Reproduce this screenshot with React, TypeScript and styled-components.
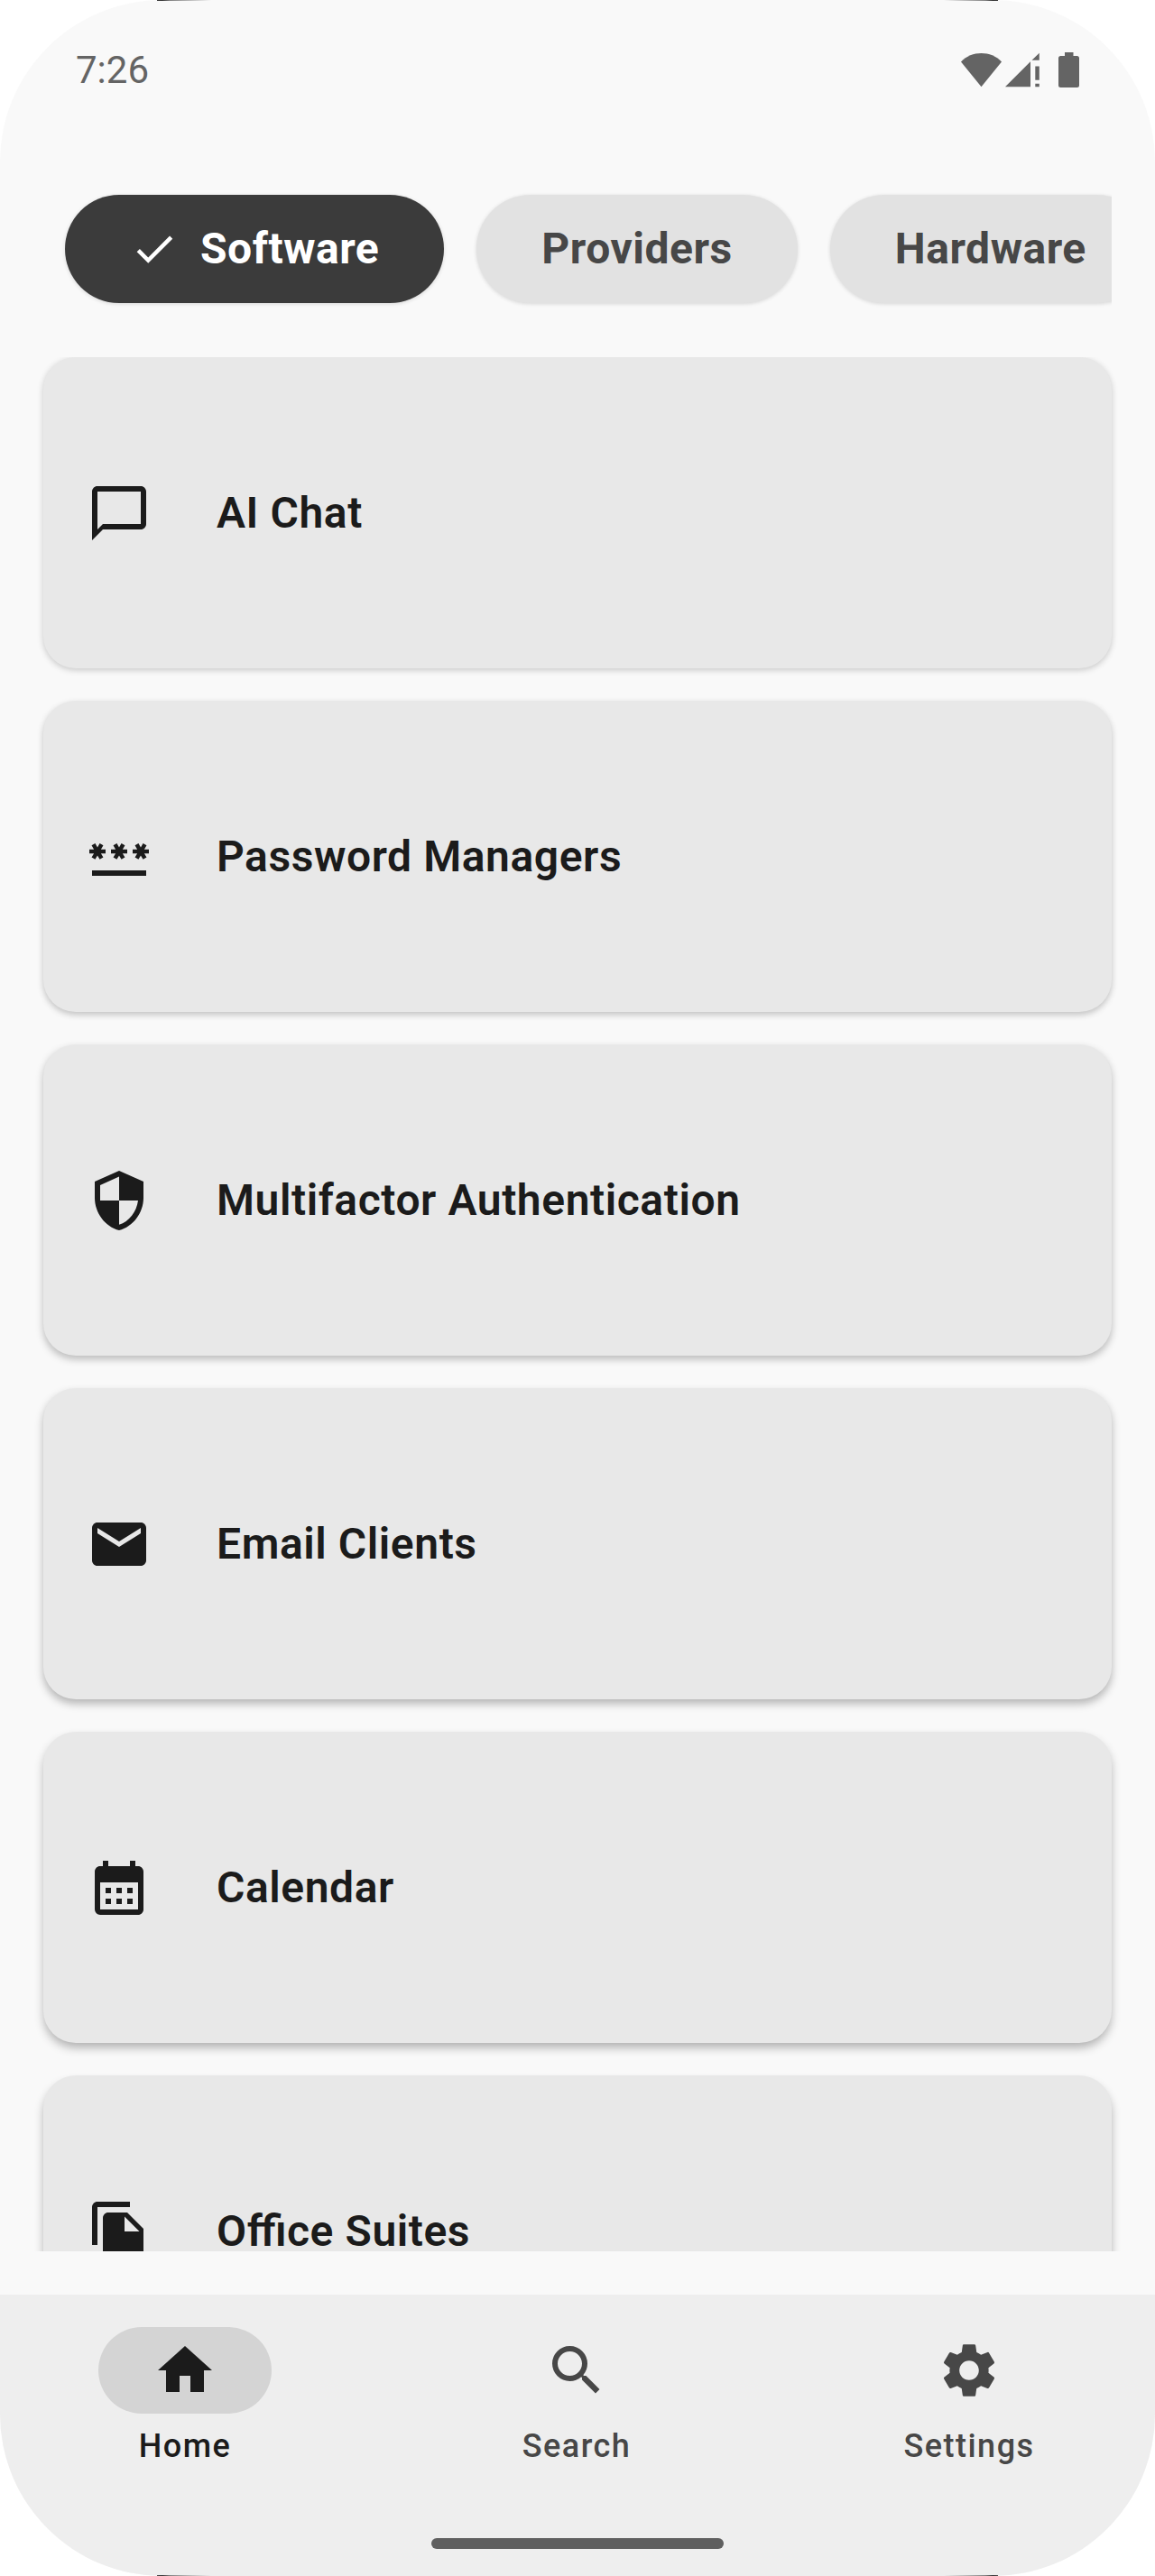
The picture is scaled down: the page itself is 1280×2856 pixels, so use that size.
import React from "react";
import styled, { createGlobalStyle } from "styled-components";
import type { IconType } from "react-icons";
import {
  MdCalendarMonth,
  MdChatBubbleOutline,
  MdCheck,
  MdEmail,
  MdFileCopy,
  MdHome,
  MdPassword,
  MdSearch,
  MdSecurity,
  MdSettings,
} from "react-icons/md";

const GlobalStyle = createGlobalStyle`
  *, *::before, *::after { box-sizing: border-box; }
  body {
    margin: 0;
    background: #ffffff;
    font-family: Roboto, "Liberation Sans", sans-serif;
  }
  svg { display: block; }
  button { font: inherit; border: 0; padding: 0; background: none; }
`;

const edgeLines = (side: "top" | "bottom") => `
  linear-gradient(90deg, #000 0, #808080 14px, #b8b8b8 36px, transparent 60px) 174px ${side} / 60px 1px no-repeat,
  linear-gradient(270deg, #000 0, #808080 14px, #b8b8b8 36px, transparent 60px) 1046px ${side} / 60px 1px no-repeat`;

const Screen = styled.div`
  display: flex;
  flex-direction: column;
  width: 1280px;
  height: 2856px;
  overflow: hidden;
  border-radius: 180px;
  background: ${edgeLines("top")}, #f9f9f9;
`;

const StatusBar = styled.header`
  display: flex;
  align-items: center;
  justify-content: space-between;
  height: 156px;
  padding: 0 83px 0 84px;
  color: #646464;
`;

const Clock = styled.span`
  font-size: 42px;
  line-height: 48px;
`;

const StatusIcons = styled.div`
  display: flex;
  align-items: center;
`;

const ChipRow = styled.nav`
  display: flex;
  gap: 36px;
  height: 240px;
  margin: 0 48px;
  padding: 60px 24px;
  overflow: hidden;
`;

const Chip = styled.button<{ $selected?: boolean }>`
  display: flex;
  flex: none;
  align-items: center;
  gap: 24px;
  height: 120px;
  padding: 0 72px;
  border-radius: 60px;
  background: ${(p) => (p.$selected ? "#3b3b3b" : "#e2e2e2")};
  color: ${(p) => (p.$selected ? "#ffffff" : "#474747")};
  font-size: 48px;
  font-weight: 700;
  line-height: 72px;
  letter-spacing: 0.53px;
  white-space: nowrap;
  box-shadow: 0 1px 4px rgba(0, 0, 0, 0.14);
`;

const CardList = styled.main`
  display: flex;
  flex-direction: column;
  gap: 36px;
  height: 2100px;
  padding: 0 48px;
  overflow: hidden;
`;

const Card = styled.section<{ $depth: number }>`
  display: flex;
  flex: none;
  align-items: center;
  gap: 72px;
  height: 345px;
  padding: 0 48px;
  border-radius: 36px;
  background: #e8e8e8;
  color: #1b1b1b;
  box-shadow: 0 ${(p) => 2 + p.$depth}px ${(p) => 7 + p.$depth * 0.8}px
    ${(p) => p.$depth * -0.3}px rgba(0, 0, 0, ${(p) => 0.2 + p.$depth * 0.025});
`;

const CardTitle = styled.h2`
  margin: 0;
  font-size: 48px;
  font-weight: 600;
  line-height: 72px;
  letter-spacing: 0.57px;
  font-feature-settings: "liga" 1;
  white-space: nowrap;
`;

const BottomBar = styled.footer`
  display: flex;
  flex-direction: column;
  align-items: center;
  justify-content: space-between;
  height: 312px;
  margin-top: 48px;
  padding: 36px 0 30px;
  background: ${edgeLines("bottom")}, #eeeeee;
`;

const Tabs = styled.nav`
  display: grid;
  grid-template-columns: 410px 410px 412px;
  gap: 24px;
`;

const Tab = styled.button<{ $active?: boolean }>`
  display: flex;
  flex-direction: column;
  align-items: center;
  gap: 12px;
  color: ${(p) => (p.$active ? "#1b1b1b" : "#474747")};
`;

const Indicator = styled.span<{ $active?: boolean }>`
  display: flex;
  align-items: center;
  justify-content: center;
  width: 192px;
  height: 96px;
  border-radius: 48px;
  background: ${(p) => (p.$active ? "#d4d4d4" : "transparent")};
`;

const TabLabel = styled.span`
  font-size: 36px;
  font-weight: 500;
  line-height: 48px;
  letter-spacing: 1.5px;
`;

const GestureHandle = styled.div`
  width: 324px;
  height: 12px;
  border-radius: 6px;
  background: #5f5f5f;
`;

const StatusGlyphs = () => (
  <svg width="132" height="40" viewBox="0 0 132 40" fill="currentColor">
    <path d="M0 10.5C6 4 14 1 22.5 1S39 4 45 10.5L22.5 38.3z" />
    <path d="M49 38.3 77 10.3v28zM78.5 8.7 86.8.8v7.9zM82.3 15.5h4.5v15.3h-4.5zM82.3 34.8h4.5v3.5h-4.5z" />
    <path d="M115 0h9.500v4h4a2.500 2.500 0 0 1 2.500 2.500v30a2.500 2.500 0 0 1-2.500 2.500h-18a2.500 2.500 0 0 1-2.500-2.500v-30A2.500 2.500 0 0 1 110.500 4h4.500z" />
  </svg>
);

const cards: { title: string; icon: IconType }[] = [
  { title: "AI Chat", icon: MdChatBubbleOutline },
  { title: "Password Managers", icon: MdPassword },
  { title: "Multifactor Authentication", icon: MdSecurity },
  { title: "Email Clients", icon: MdEmail },
  { title: "Calendar", icon: MdCalendarMonth },
  { title: "Office Suites", icon: MdFileCopy },
];

const tabs: { label: string; icon: IconType; active?: boolean }[] = [
  { label: "Home", icon: MdHome, active: true },
  { label: "Search", icon: MdSearch },
  { label: "Settings", icon: MdSettings },
];

export default function App() {
  return (
    <>
      <GlobalStyle />
      <Screen>
        <StatusBar>
          <Clock>7:26</Clock>
          <StatusIcons>
            <StatusGlyphs />
          </StatusIcons>
        </StatusBar>
        <ChipRow>
          <Chip $selected>
            <MdCheck size={54} />
            Software
          </Chip>
          <Chip>Providers</Chip>
          <Chip>Hardware</Chip>
        </ChipRow>
        <CardList>
          {cards.map(({ title, icon: Icon }, i) => (
            <Card key={title} $depth={i}>
              <Icon size={72} />
              <CardTitle>{title}</CardTitle>
            </Card>
          ))}
        </CardList>
        <BottomBar>
          <Tabs>
            {tabs.map(({ label, icon: Icon, active }) => (
              <Tab key={label} $active={active}>
                <Indicator $active={active}>
                  <Icon size={72} />
                </Indicator>
                <TabLabel>{label}</TabLabel>
              </Tab>
            ))}
          </Tabs>
          <GestureHandle />
        </BottomBar>
      </Screen>
    </>
  );
}
